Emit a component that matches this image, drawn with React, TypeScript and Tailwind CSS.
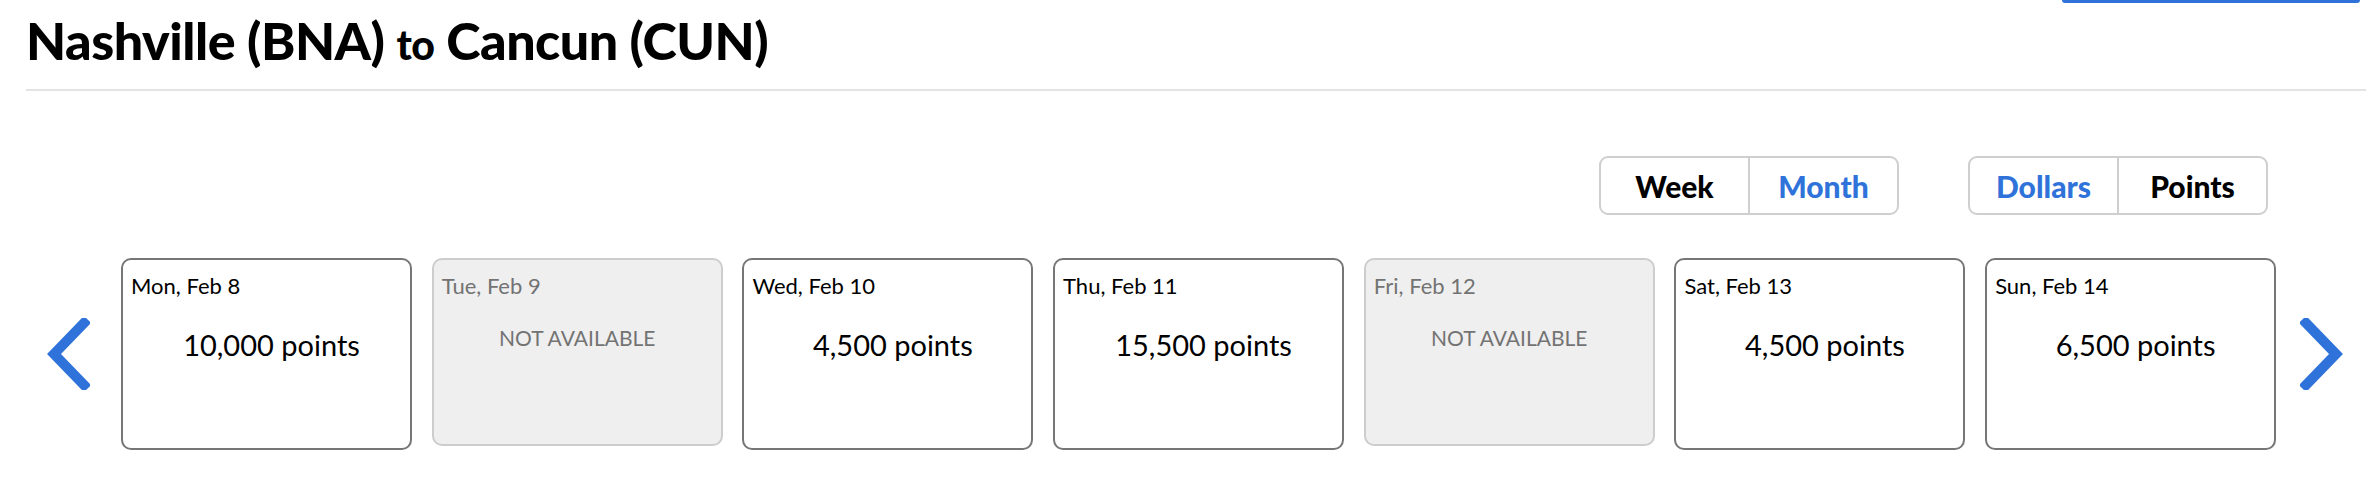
import type { ReactNode } from "react";

type Day = { label: string; value?: string };

const days: Day[] = [
  { label: "Mon, Feb 8", value: "10,000 points" },
  { label: "Tue, Feb 9" },
  { label: "Wed, Feb 10", value: "4,500 points" },
  { label: "Thu, Feb 11", value: "15,500 points" },
  { label: "Fri, Feb 12" },
  { label: "Sat, Feb 13", value: "4,500 points" },
  { label: "Sun, Feb 14", value: "6,500 points" },
];

function Chevron({ dir }: { dir: "left" | "right" }) {
  return (
    <svg width="44" height="72" viewBox="0 0 44 72" className="shrink-0">
      <path
        d={dir === "left" ? "M38 5 L8 36 L38 67" : "M6 5 L36 36 L6 67"}
        fill="none"
        stroke="#2f73da"
        strokeWidth="10"
        strokeLinecap="square"
        strokeLinejoin="miter"
      />
    </svg>
  );
}

function Toggle({ left, right, activeLeft }: { left: string; right: string; activeLeft: boolean }) {
  const cell = "flex w-[147px] items-center justify-center text-[30px] font-black leading-none";
  return (
    <div className="flex h-[59px] rounded-[9px] border-2 border-[#cfcfcf] bg-white">
      <div className={`${cell} ${activeLeft ? "text-black" : "text-[#2f73da]"}`}>{left}</div>
      <div className="w-[2px] bg-[#cfcfcf]" />
      <div className={`${cell} ${activeLeft ? "text-[#2f73da]" : "text-black"}`}>{right}</div>
    </div>
  );
}

function Card({ day }: { day: Day }): ReactNode {
  if (!day.value) {
    return (
      <div className="flex h-[188px] w-[291px] shrink-0 flex-col rounded-[10px] border-2 border-[#cdcdcd] bg-[#efefef] px-[8px] pt-[13px] text-[#737373]">
        <div className="text-[22px] leading-[26px]">{day.label}</div>
        <div className="mt-[26px] text-center text-[21px] leading-[26px]">NOT AVAILABLE</div>
      </div>
    );
  }
  return (
    <div className="flex h-[192px] w-[291px] shrink-0 flex-col rounded-[10px] border-2 border-[#767676] bg-white px-[8px] pt-[13px] text-black">
      <div className="text-[22px] leading-[26px]">{day.label}</div>
      <div className="ml-[10px] mt-[28px] text-center text-[29px] leading-[36px]">{day.value}</div>
    </div>
  );
}

export default function App() {
  return (
    <div className="min-h-[492px] w-[2372px] bg-white font-['Lato',sans-serif] text-black">
      <header className="flex items-start justify-between pl-[26px] pr-[12px]">
        <h1 className="pt-[10px] text-[52px] font-black leading-[60px] tracking-[-0.5px]">
          Nashville (BNA) <span className="text-[41px]">to</span> Cancun (CUN)
        </h1>
        <div className="h-[3px] w-[298px] rounded-b-[8px] bg-[#2f73da]" />
      </header>
      <div className="ml-[26px] mr-[6px] mt-[14px] h-[2px] bg-[#e3e3e3]" />
      <div className="mt-[65px] flex justify-end gap-[69px] pr-[104px]">
        <Toggle left="Week" right="Month" activeLeft />
        <Toggle left="Dollars" right="Points" activeLeft={false} />
      </div>
      <div className="mt-[43px] flex items-start pl-[46px]">
        <div className="flex h-[192px] w-[75px] items-center">
          <Chevron dir="left" />
        </div>
        <div className="flex gap-[19.7px]">
          {days.map((d) => (
            <Card key={d.label} day={d} />
          ))}
        </div>
        <div className="flex h-[192px] items-center pl-[24px]">
          <Chevron dir="right" />
        </div>
      </div>
    </div>
  );
}
